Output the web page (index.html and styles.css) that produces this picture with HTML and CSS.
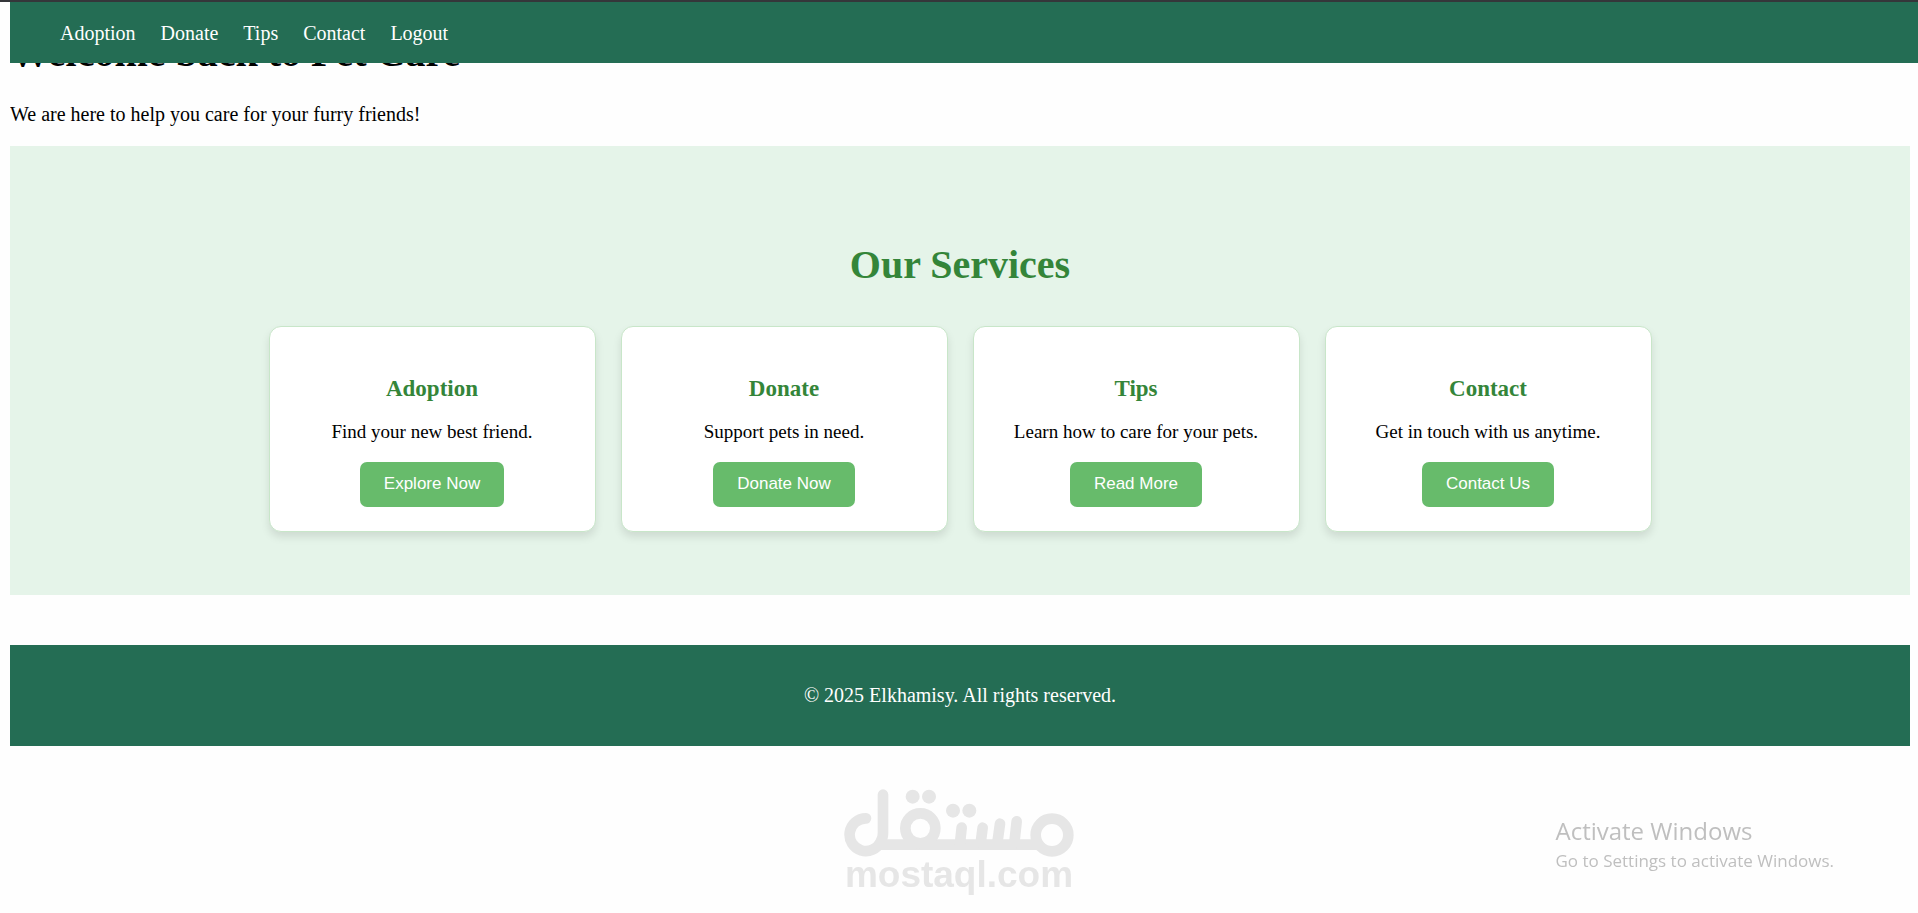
FILE: index.html
```
<!DOCTYPE html>
<html lang="en">
<head>
<meta charset="utf-8">
<meta name="viewport" content="width=device-width, initial-scale=1">
<title>Pet Care</title>
<link rel="stylesheet" href="styles.css">
</head>
<body>

<nav class="navbar">
	<a href="#adoption">Adoption</a>
	<a href="#donate">Donate</a>
	<a href="#tips">Tips</a>
	<a href="#contact">Contact</a>
	<a href="#logout">Logout</a>
</nav>

<main>
	<header class="welcome">
		<h1>Welcome back to Pet Care</h1>
		<p>We are here to help you care for your furry friends!</p>
	</header>

	<section class="services">
		<h2>Our Services</h2>
		<div class="cards">
			<div class="card" id="adoption">
				<h3>Adoption</h3>
				<p>Find your new best friend.</p>
				<button type="button">Explore Now</button>
			</div>
			<div class="card" id="donate">
				<h3>Donate</h3>
				<p>Support pets in need.</p>
				<button type="button">Donate Now</button>
			</div>
			<div class="card" id="tips">
				<h3>Tips</h3>
				<p>Learn how to care for your pets.</p>
				<button type="button">Read More</button>
			</div>
			<div class="card" id="contact">
				<h3>Contact</h3>
				<p>Get in touch with us anytime.</p>
				<button type="button">Contact Us</button>
			</div>
		</div>
	</section>
</main>

<footer class="footer">
	<p>&copy; 2025 Elkhamisy. All rights reserved.</p>
</footer>

<div class="watermark">
	<svg viewBox="72 56 690 204" aria-hidden="true">
		<g fill="none" stroke="currentColor" stroke-width="32" stroke-linecap="round" stroke-linejoin="round">
			<path d="M138 144A49 49 0 1 0 182 214C187 206 189 198 189 188V73"/>
			<path d="M180 223H655"/>
			<circle cx="301" cy="174" r="45"/>
			<circle cx="696" cy="194" r="49"/>
			<path d="M425 172L420 218M488 172L482 218M540 160L532 218M590 153L583 218"/>
		</g>
		<g fill="currentColor">
			<circle cx="278" cy="79" r="21"/>
			<circle cx="327" cy="79" r="21"/>
			<circle cx="399" cy="121" r="21"/>
			<circle cx="448" cy="121" r="21"/>
		</g>
	</svg>
	<span>mostaql.com</span>
</div>

<div class="activate">
	<strong>Activate Windows</strong>
	<span>Go to Settings to activate Windows.</span>
</div>

</body>
</html>
```
FILE: styles.css
```
* {box-sizing: border-box;}

html {
	border-top: 2px solid #35363a;
	background: #fefefe;
}
body {
	margin: 0 8px 0 10px;
	padding-top: 28px;
	font: 20px/23px "Liberation Serif", "Times New Roman", serif;
	color: #000;
}

/* navbar stays over the page while it scrolls */
.navbar {
	position: fixed;
	z-index: 10;
	top: 2px; left: 10px; right: 0;
	display: flex;
	gap: 25px;
	padding: 20px 50px 18px;
	background: #246d54;
}
.navbar a {
	color: #fff;
	text-decoration: none;
}

.welcome h1 {
	margin: 0 0 27px;
	font-size: 40px;
	line-height: 46px;
}
.welcome p {
	margin: 0 0 20px;
}

/* --------------------------------- */

.services {
	padding: 63px 20px;
	background: #e5f4e9;
	text-align: center;
}
.services h2 {
	margin: 33px 0 38px;
	font-size: 40px;
	line-height: 46px;
	color: #348539;
}
.cards {
	display: flex;
	gap: 25px;
	max-width: 1383px;
	margin: 0 auto;
}
.card {
	flex: 1;
	padding: 24px;
	border: 1px solid #c8e6c9;
	border-radius: 12px;
	background: #fff;
	box-shadow: 0 5px 8px rgba(0,0,0,0.1);
}
.card h3 {
	margin: 24px 0 19px;
	font-size: 23px;
	line-height: 27px;
	color: #348539;
}
.card p {
	margin: 0 0 19px;
	font-size: 19px;
	line-height: 22px;
}
.card button {
	display: block;
	margin: 0 auto;
	padding: 12px 24px 14px;
	border: 0;
	border-radius: 7px;
	background: #67bb6b;
	color: #fff;
	font: 17px/19px "Liberation Sans", Arial, sans-serif;
	cursor: pointer;
}

.footer {
	margin-top: 50px;
	padding: 39px 20px;
	background: #246d54;
	color: #fff;
	text-align: center;
}
.footer p {margin: 0;}

/* --------------------------------- */

.watermark, .activate {
	position: fixed;
	display: flex;
	flex-direction: column;
	pointer-events: none;
}
.watermark {
	left: 0; right: 0; bottom: 20px;
	align-items: center;
	color: #e6e6e6;
	font: bold 37px/36px "Liberation Sans", Arial, sans-serif;
}
.watermark svg {
	width: 230px;
	height: 68px;
}
.activate {
	right: 84px; bottom: 39px;
	color: #bfbfbf;
	font: 17px/26px "Open Sans", "Noto Sans", sans-serif;
}
.activate strong {
	font-size: 24px;
	font-weight: normal;
	line-height: 34px;
}
```
